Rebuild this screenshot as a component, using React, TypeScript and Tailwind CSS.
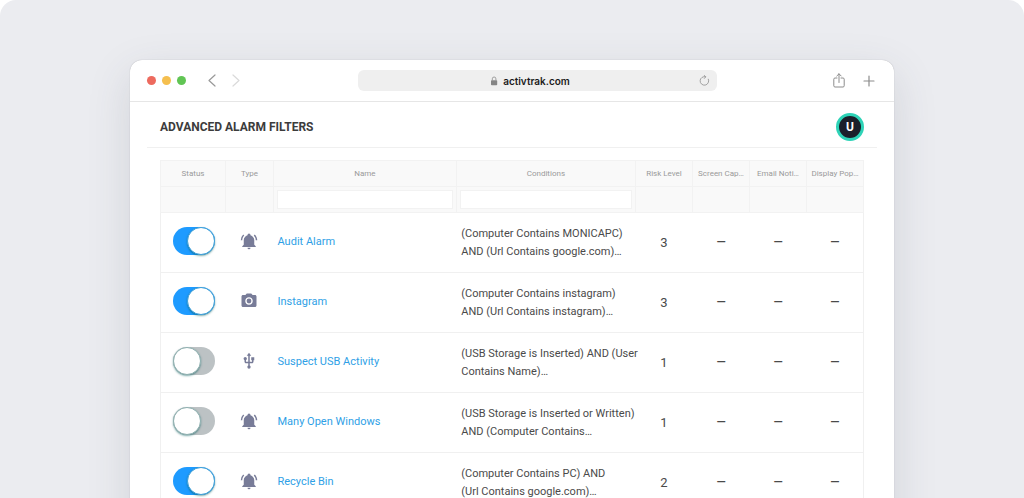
import { MdPhotoCamera, MdUsb } from "react-icons/md"

type AlarmType = "alert" | "camera" | "usb"

interface Alarm {
  name: string
  type: AlarmType
  conditions: [string, string]
  risk: number
  enabled: boolean
}

const alarms: Alarm[] = [
  {
    name: "Audit Alarm",
    type: "alert",
    conditions: ["(Computer Contains MONICAPC)", "AND (Url Contains google.com)…"],
    risk: 3,
    enabled: true,
  },
  {
    name: "Instagram",
    type: "camera",
    conditions: ["(Computer Contains instagram)", "AND (Url Contains instagram)…"],
    risk: 3,
    enabled: true,
  },
  {
    name: "Suspect USB Activity",
    type: "usb",
    conditions: ["(USB Storage is Inserted) AND (User", "Contains Name)…"],
    risk: 1,
    enabled: false,
  },
  {
    name: "Many Open Windows",
    type: "alert",
    conditions: ["(USB Storage is Inserted or Written)", "AND (Computer Contains…"],
    risk: 1,
    enabled: false,
  },
  {
    name: "Recycle Bin",
    type: "alert",
    conditions: ["(Computer Contains PC) AND", "(Url Contains google.com)…"],
    risk: 2,
    enabled: true,
  },
]

const columns = [
  { label: "Status", filter: false },
  { label: "Type", filter: false },
  { label: "Name", filter: true },
  { label: "Conditions", filter: true },
  { label: "Risk Level", filter: false },
  { label: "Screen Cap…", filter: false },
  { label: "Email Noti…", filter: false },
  { label: "Display Pop…", filter: false },
]

function BellRing({ className }: { className?: string }) {
  return (
    <svg className={className} viewBox="0 0 24 24" fill="currentColor" aria-hidden="true">
      <path d="M21 19v1H3v-1l2-2v-6c0-3.1 2.03-5.83 5-6.71V4a2 2 0 0 1 4 0v.29c2.97.88 5 3.61 5 6.71v6l2 2m-7 2a2 2 0 0 1-4 0M19.75 3.19l-1.42 1.42A8.98 8.98 0 0 1 21 11h2c0-2.93-1.16-5.75-3.25-7.81M1 11h2c0-2.4.96-4.7 2.67-6.39L4.25 3.19A10.96 10.96 0 0 0 1 11Z" />
    </svg>
  )
}

const typeIcons = {
  alert: BellRing,
  camera: MdPhotoCamera,
  usb: MdUsb,
}

function BrowserBar() {
  return (
    <div className="flex h-[42px] items-center border-b border-[#e6e6e6] px-[17px]">
      <div className="flex w-[211px] shrink-0 items-center">
        <div className="flex gap-[6px]">
          <span className="size-[9px] rounded-full bg-[#ed6a5e]" />
          <span className="size-[9px] rounded-full bg-[#f5bf4f]" />
          <span className="size-[9px] rounded-full bg-[#61c554]" />
        </div>
        <button aria-label="Back" className="ml-[22px] text-[#999]">
          <svg className="h-[13px] w-[8px]" viewBox="0 0 8 13" fill="none" stroke="currentColor" strokeWidth="1.2" strokeLinecap="round" strokeLinejoin="round">
            <path d="M7 1 1 6.5 7 12" />
          </svg>
        </button>
        <button aria-label="Forward" className="ml-4 text-[#dadada]">
          <svg className="h-[13px] w-[8px]" viewBox="0 0 8 13" fill="none" stroke="currentColor" strokeWidth="1.2" strokeLinecap="round" strokeLinejoin="round">
            <path d="M1 1 7 6.5 1 12" />
          </svg>
        </button>
      </div>

      <div className="flex h-[21px] flex-1 items-center rounded-md bg-[#efefef] px-[7px]">
        <div className="flex flex-1 items-center justify-center gap-[5px] pr-1">
          <svg className="h-[10px] w-[8px]" viewBox="0 0 8 10" fill="none" aria-hidden="true">
            <rect x="1" y="4.2" width="6.2" height="5" rx="0.8" fill="#858585" />
            <path d="M2.3 4.5V2.8a1.8 1.8 0 0 1 3.6 0v1.7" stroke="#959595" strokeWidth="0.9" />
          </svg>
          <input
            aria-label="Address"
            defaultValue="activtrak.com"
            className="field-sizing-content bg-transparent font-[Inter,sans-serif] text-[10px] leading-4 font-semibold text-[#1c1c1c] outline-none"
          />
        </div>
        <button aria-label="Reload" className="text-[#999]">
          <svg className="size-[11px]" viewBox="0 0 11 11" fill="none" stroke="currentColor" strokeWidth="0.9" strokeLinecap="round" strokeLinejoin="round">
            <path d="M6.5 1.7A4.3 4.3 0 1 0 9.4 4.2" />
            <path d="M5.2 0.4 6.8 1.8 5.4 3.4" />
          </svg>
        </button>
      </div>

      <div className="flex w-[160px] shrink-0 items-center justify-end gap-[18px] pr-[2px] text-[#8c8c8c]">
        <button aria-label="Share">
          <svg className="h-[15px] w-[12px]" viewBox="0 0 12 15" fill="none" stroke="currentColor" strokeLinecap="round" strokeLinejoin="round">
            <path d="M4 5H2A1.2 1.2 0 0 0 .8 6.2v6.6A1.2 1.2 0 0 0 2 14h8a1.2 1.2 0 0 0 1.2-1.2V6.2A1.2 1.2 0 0 0 10 5H8" />
            <path d="M6 9.5V.8M3.8 3 6 .8 8.2 3" />
          </svg>
        </button>
        <button aria-label="New tab">
          <svg className="size-[12px]" viewBox="0 0 12 12" fill="none" stroke="currentColor" strokeWidth="1.2" strokeLinecap="round">
            <path d="M6 1v10M1 6h10" />
          </svg>
        </button>
      </div>
    </div>
  )
}

function AlarmRow({ alarm }: { alarm: Alarm }) {
  const Icon = typeIcons[alarm.type]

  return (
    <tr className="h-[60px] border-b border-[#f0f0f0]">
      <td className="pb-1 pl-3">
        <input
          type="checkbox"
          role="switch"
          aria-label={`${alarm.name} enabled`}
          defaultChecked={alarm.enabled}
          className="flex h-7 w-[42px] appearance-none rounded-full bg-[#bcc2c4] before:size-7 before:rounded-full before:border before:border-[#8fb0b0] before:bg-white before:shadow-[0_1px_2px_rgba(0,90,90,0.5)] checked:justify-end checked:bg-[#1e9bff] checked:before:border-[#3f9fd8]"
        />
      </td>
      <td className="pr-[1px] pb-1">
        <Icon className="mx-auto size-[18px] text-[#787c98]" />
      </td>
      <td className="pl-1 text-[11px]">
        <a href="#" className="text-[#2f9fe6]">{alarm.name}</a>
      </td>
      <td className="pl-[5px] text-[11px] leading-[18px] whitespace-nowrap text-[#4a4a4a]">
        {alarm.conditions[0]}
        <br />
        {alarm.conditions[1]}
      </td>
      <td className="text-center text-[13px] text-[#4a4a4a]">{alarm.risk}</td>
      <td className="pb-[2px] text-center text-xs font-medium text-[#4a4a4a]">—</td>
      <td className="pb-[2px] text-center text-xs font-medium text-[#4a4a4a]">—</td>
      <td className="pb-[2px] text-center text-xs font-medium text-[#4a4a4a]">—</td>
    </tr>
  )
}

function AlarmTable() {
  return (
    <table className="w-full table-fixed border-collapse border border-[#f0f0f0]">
      <colgroup>
        <col className="w-[65px]" />
        <col className="w-[48px]" />
        <col className="w-[26%]" />
        <col />
        <col className="w-[57px]" />
        <col className="w-[57px]" />
        <col className="w-[57px]" />
        <col className="w-[57px]" />
      </colgroup>
      <thead className="bg-[#f9f9f9]">
        <tr className="h-[26px]">
          {columns.map((column) => (
            <th
              key={column.label}
              scope="col"
              className="border border-[#f2f2f2] text-[8px] font-normal whitespace-nowrap text-[#999]"
            >
              {column.label}
            </th>
          ))}
        </tr>
        <tr className="h-[26px]">
          {columns.map((column) => (
            <td key={column.label} className="border border-[#f2f2f2] px-[3px]">
              {column.filter && (
                <input
                  type="text"
                  aria-label={`Filter by ${column.label}`}
                  className="block h-[19px] w-full border border-[#f2f2f2] bg-white px-1 text-[11px] outline-none"
                />
              )}
            </td>
          ))}
        </tr>
      </thead>
      <tbody>
        {alarms.map((alarm) => (
          <AlarmRow key={alarm.name} alarm={alarm} />
        ))}
      </tbody>
    </table>
  )
}

export default function App() {
  return (
    <div className="h-screen overflow-hidden rounded-t-2xl bg-[#ebecf0] px-[130px] pt-[60px] font-[Roboto,sans-serif]">
      <div className="rounded-t-xl bg-white pb-8 shadow-[0_0_1px_rgba(0,0,0,0.3),0_14px_44px_rgba(60,70,90,0.15)]">
        <BrowserBar />
        <main className="px-[17px]">
          <header className="flex h-[46px] items-center justify-between border-b border-[#f0f0f0] px-[13px] pt-1">
            <h1 className="text-xs font-bold text-[#3c3c3c]">ADVANCED ALARM FILTERS</h1>
            <button
              aria-label="Account"
              className="flex size-7 items-center justify-center rounded-full border-3 border-[#2ed3b7] bg-[#1b1f2a] text-xs font-bold text-white"
            >
              U
            </button>
          </header>
          <div className="px-[13px] pt-3">
            <AlarmTable />
          </div>
        </main>
      </div>
    </div>
  )
}
